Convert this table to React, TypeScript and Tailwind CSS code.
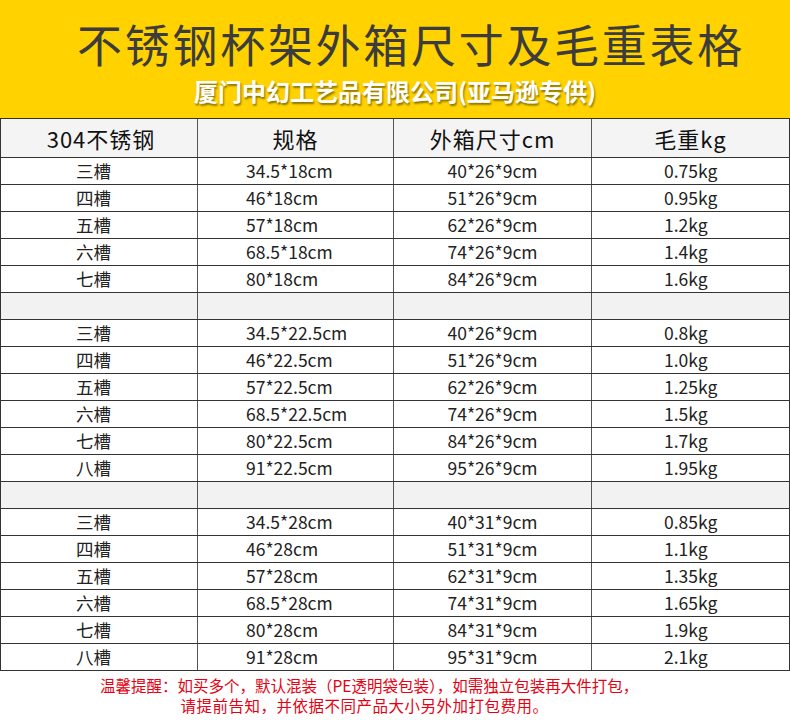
import React from "react";

type Row = [string, string, string, string] | null;

const rows: Row[] = [
  ["三槽", "34.5*18cm", "40*26*9cm", "0.75kg"],
  ["四槽", "46*18cm", "51*26*9cm", "0.95kg"],
  ["五槽", "57*18cm", "62*26*9cm", "1.2kg"],
  ["六槽", "68.5*18cm", "74*26*9cm", "1.4kg"],
  ["七槽", "80*18cm", "84*26*9cm", "1.6kg"],
  null,
  ["三槽", "34.5*22.5cm", "40*26*9cm", "0.8kg"],
  ["四槽", "46*22.5cm", "51*26*9cm", "1.0kg"],
  ["五槽", "57*22.5cm", "62*26*9cm", "1.25kg"],
  ["六槽", "68.5*22.5cm", "74*26*9cm", "1.5kg"],
  ["七槽", "80*22.5cm", "84*26*9cm", "1.7kg"],
  ["八槽", "91*22.5cm", "95*26*9cm", "1.95kg"],
  null,
  ["三槽", "34.5*28cm", "40*31*9cm", "0.85kg"],
  ["四槽", "46*28cm", "51*31*9cm", "1.1kg"],
  ["五槽", "57*28cm", "62*31*9cm", "1.35kg"],
  ["六槽", "68.5*28cm", "74*31*9cm", "1.65kg"],
  ["七槽", "80*28cm", "84*31*9cm", "1.9kg"],
  ["八槽", "91*28cm", "95*31*9cm", "2.1kg"],
];

export default function App() {
  return (
    <div className="w-[790px] h-[720px] bg-white font-['Noto_Sans_CJK_SC',sans-serif] overflow-hidden">
      <div className="h-[118px] bg-[#ffd200] flex flex-col items-center">
        <div className="mt-[14px] pl-[32px] text-[45px] leading-[60px] tracking-[2.7px] text-[#3c3c3c]">
          不锈钢杯架外箱尺寸及毛重表格
        </div>
        <div className="mt-[2px] text-[24px] leading-[30px] font-bold text-white [text-shadow:1px_2px_2px_rgba(0,0,0,0.45)]">
          厦门中幻工艺品有限公司(亚马逊专供)
        </div>
      </div>
      <div className="border-x border-[#333]">
        <div className="grid grid-cols-[197px_196px_198px_1fr] h-[40px] border-y border-[#333] bg-[#f4f4f4] text-[22px] tracking-[1px] text-[#111] items-stretch">
          <div className="flex items-center justify-center pl-[4px] border-r border-[#555]">304不锈钢</div>
          <div className="flex items-center justify-center border-r border-[#555]">规格</div>
          <div className="flex items-center justify-center border-r border-[#555]">外箱尺寸cm</div>
          <div className="flex items-center justify-center">毛重kg</div>
        </div>
        {rows.map((r, i) =>
          r ? (
            <div key={i} className="grid grid-cols-[197px_196px_198px_1fr] h-[27px] border-b border-[#333] text-[17.5px] text-[#222] leading-none">
              <div className="flex items-center pl-[75px] border-r border-[#555]">{r[0]}</div>
              <div className="flex items-center pl-[48px] border-r border-[#555]">{r[1]}</div>
              <div className="flex items-center justify-center border-r border-[#555]">{r[2]}</div>
              <div className="flex items-center pl-[72px]">{r[3]}</div>
            </div>
          ) : (
            <div key={i} className="grid grid-cols-[197px_196px_198px_1fr] h-[27px] border-b border-[#333] bg-[#f2f2f2]">
              <div className="border-r border-[#555]" />
              <div className="border-r border-[#555]" />
              <div className="border-r border-[#555]" />
              <div />
            </div>
          )
        )}
      </div>
      <div className="flex pl-[100px] pt-[4px] text-[15.5px] leading-[20px] text-[#e60012]">
        <span>温馨提醒：</span>
        <div className="flex flex-col">
          <span>如买多个，默认混装（PE透明袋包装），如需独立包装再大件打包，</span>
          <span className="pl-[3px] tracking-[0.5px]">请提前告知，并依据不同产品大小另外加打包费用。</span>
        </div>
      </div>
    </div>
  );
}
